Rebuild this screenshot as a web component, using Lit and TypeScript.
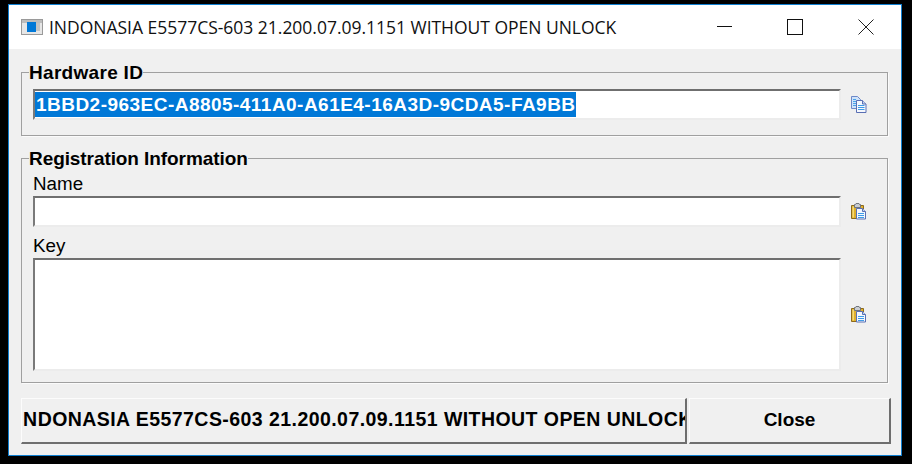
import { LitElement, html, css, svg } from "lit";
import { customElement } from "lit/decorators.js";

const page = (x: number, y: number) => svg`
  <path d="M${x + .5} ${y + .5}h6l3 3v7.5h-9z" fill="#f4f8fd" stroke="#5a70b4"/>
  <path d="M${x + 6.5} ${y + .5}v3h3" fill="#c4d4ee" stroke="#5a70b4"/>
  <path d="M${x + 2} ${y + 5.5}h6M${x + 2} ${y + 7.5}h6M${x + 2} ${y + 9.5}h6" stroke="#3f9be8"/>`;

const copyIcon = html`<svg class="ico" width="16" height="17" viewBox="0 0 16 17">
  <path d="M.5.5h6l3 3v9h-9z" fill="#cfe3fa" stroke="#6d88c8"/>
  <path d="M2 3.5h3M2 5.5h4M2 7.5h4M2 9.5h4" stroke="#4aa3ea"/>
  <path d="M5.5 4.5h6l3.5 3.5v8.5h-9.5z" fill="#f5f8fd" stroke="#5a6fb4"/>
  <path d="M11.5 4.5V8H15" fill="#c4d4ee" stroke="#5a6fb4"/>
  <path d="M7 9.5h6.500M7 11.500h6.500M7 13.500h6.500" stroke="#3f9be8"/>
</svg>`;

const pasteIcon = html`<svg class="ico" width="16" height="17" viewBox="0 0 16 17">
  <path d="M.5 2.500h12v13h-12z" fill="#e0b02c" stroke="#8d6a1c"/>
  <path d="M1.500 3.500h1.500v11h-1.500z" fill="#f4d976"/>
  <path d="M3.500 1.500h1l.5-1h3l.5 1h1v3h-6z" fill="#c9cdd2" stroke="#70757c"/>
  ${page(5, 5)}
</svg>`;

@customElement("app-root")
export class AppRoot extends LitElement {
  static styles = css`
    :host { display: block; width: 912px; height: 464px; background: #000; padding: 4px 10px 8px 8px; box-sizing: border-box; overflow: hidden; }
    .win { height: 100%; box-sizing: border-box; border: 1px solid #0f7fd0; background: #f0f0f0; display: flex; flex-direction: column; }
    .title { height: 44px; flex: none; background: #fff; display: flex; align-items: center; padding-left: 12px; gap: 5px; font: 17.5px "Open Sans", sans-serif; color: #111; white-space: nowrap; letter-spacing: -.02px; }
    .appico { flex: none; margin-right: 1px; }
    .title span { flex: 1; }
    .caps { display: flex; align-self: stretch; flex: none; }
    .cap { width: 71px; display: flex; align-items: center; justify-content: center; }
    .cap svg { display: block; }
    .body { flex: 1; min-height: 0; display: flex; flex-direction: column; padding: 14px 11px 0 12px; font-family: "Liberation Sans", Arial, sans-serif; color: #000; }
    fieldset { flex: none; margin: 0; padding: 0 46px 0 11px; border: 1px solid #a0a0a0; box-shadow: 1px 1px 0 #fbfbfb; min-width: 0; width: 867px; box-sizing: border-box; }
    legend { margin-left: -4px; padding: 0; font-size: 19px; font-weight: 700; line-height: 20px; height: 18px; }
    .hw { height: 73px; padding-top: 8px; }
    .hw legend { letter-spacing: .3px; }
    .reg { height: 234px; margin-top: 13px; }
    .reg legend { letter-spacing: -.08px; }
    .row { display: flex; gap: 10px; align-items: center; }
    .fld { flex: none; box-sizing: border-box; width: 808px; background: #fff; border-style: solid; border-width: 2px; border-color: #6f6f6f #ececec #ececec #7a7a7a; }
    .f1 { height: 31px; padding-top: 1px; }
    .f2 { height: 31px; }
    .f3 { height: 113px; }
    .sel { display: inline-block; background: #0078d7; color: #fff; font-size: 19px; font-weight: 700; letter-spacing: .47px; line-height: 25px; height: 25px; white-space: nowrap; padding-left: 1px; }
    .lbl { font-size: 18.800px; line-height: 20px; height: 20px; margin: 0 0 2px 0; }
    .name { margin-top: 7px; }
    .keyl { margin-top: 9px; }
    .ico { display: block; flex: none; }
    .btns { flex: none; display: flex; gap: 2px; margin-top: 15px; height: 46px; width: 869px; }
    .btn { box-sizing: border-box; height: 46px; border-style: solid; border-width: 1px 2px 2px 1px; border-color: #fcfcfc #6e6e6e #6e6e6e #fcfcfc; background: #f0f0f0; font-weight: 700; display: flex; align-items: center; justify-content: center; white-space: nowrap; overflow: hidden; padding: 0 0 2px; }
    .b1 { width: 666px; flex: none; font-size: 19.500px; letter-spacing: .44px; padding-left: 3px; }
    .b2 { width: 202px; flex: none; font-size: 19px; }
  `;

  render() {
    const t = "INDONASIA E5577CS-603 21.200.07.09.1151 WITHOUT OPEN UNLOCK";
    return html`
      <div class="win">
        <div class="title">
          <svg class="appico" width="22" height="16" viewBox="0 0 22 16">
            <rect x=".5" y=".5" width="21" height="15" fill="#e6e6e6" stroke="#9a9a9a"/>
            <rect x="1" y="1" width="20" height="3" fill="#bdbdbd"/>
            <rect x="6" y="3" width="9" height="10" fill="#0078d7"/>
            <rect x="15" y="4" width="4" height="8" fill="#c4c4c4"/>
          </svg>
          <span>${t}</span>
          <div class="caps">
            <div class="cap"><svg width="16" height="16" viewBox="0 0 16 16"><path d="M1 7.500h15" stroke="#111"/></svg></div>
            <div class="cap"><svg width="16" height="16" viewBox="0 0 16 16"><rect x=".5" y=".5" width="15" height="15" fill="none" stroke="#111"/></svg></div>
            <div class="cap"><svg width="16" height="16" viewBox="0 0 16 16"><path d="M.5.500l15 15M15.500.500l-15 15" stroke="#222" fill="none"/></svg></div>
          </div>
        </div>
        <div class="body">
          <fieldset class="hw">
            <legend>Hardware ID</legend>
            <div class="row">
              <div class="fld f1"><span class="sel">1BBD2-963EC-A8805-411A0-A61E4-16A3D-9CDA5-FA9BB</span></div>
              ${copyIcon}
            </div>
          </fieldset>
          <fieldset class="reg">
            <legend>Registration Information</legend>
            <div class="name">
              <div class="lbl">Name</div>
              <div class="row"><div class="fld f2"></div>${pasteIcon}</div>
            </div>
            <div class="keyl">
              <div class="lbl">Key</div>
              <div class="row"><div class="fld f3"></div>${pasteIcon}</div>
            </div>
          </fieldset>
          <div class="btns">
            <div class="btn b1"><span>${t}</span></div>
            <div class="btn b2"><span>Close</span></div>
          </div>
        </div>
      </div>
    `;
  }
}
